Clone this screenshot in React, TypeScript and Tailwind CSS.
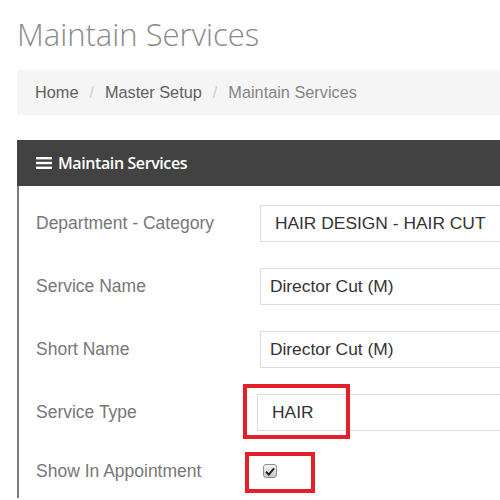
import React from "react";

type Field = {
  label: string;
  value: string;
  pad: string;
};

const fields: Field[] = [
  { label: "Department - Category", value: "HAIR DESIGN - HAIR CUT", pad: "pl-[14px]" },
  { label: "Service Name", value: "Director Cut (M)", pad: "pl-[9px]" },
  { label: "Short Name", value: "Director Cut (M)", pad: "pl-[9px]" },
];

function MenuIcon() {
  return (
    <svg width="16" height="14" viewBox="0 0 16 14" className="mr-[6px]">
      <rect x="0" y="1" width="16" height="2.4" fill="#fff" />
      <rect x="0" y="5.8" width="16" height="2.4" fill="#fff" />
      <rect x="0" y="10.6" width="16" height="2.4" fill="#fff" />
    </svg>
  );
}

function CheckBox() {
  return (
    <span className="flex h-[14px] w-[14px] items-center justify-center rounded-[3px] border border-[#8f8f8f] bg-gradient-to-b from-[#f4f4f4] to-[#c9c9c9]">
      <svg width="10" height="9" viewBox="0 0 10 9">
        <path d="M1 4.8 L3.8 7.6 L9 1.4" fill="none" stroke="#222" strokeWidth="2" />
      </svg>
    </span>
  );
}

export default function App() {
  return (
    <div className="h-[500px] w-[500px] overflow-hidden bg-white pl-[17px] font-['Liberation_Sans',Arial,sans-serif]">
      <h1 className="pt-[15px] font-['Open_Sans',sans-serif] text-[31px] font-light leading-[38px] text-[#8a8a8a] whitespace-nowrap">
        Maintain Services
      </h1>

      {/* breadcrumb */}
      <div className="mt-[17px] flex h-[45px] w-[560px] items-center bg-[#f5f5f5] pl-[18px] text-[16.3px] whitespace-nowrap">
        <span className="text-[#606060]">Home</span>
        <span className="px-[11px] text-[#ccc]">/</span>
        <span className="text-[#606060]">Master Setup</span>
        <span className="px-[11px] text-[#ccc]">/</span>
        <span className="text-[#858585]">Maintain Services</span>
      </div>

      {/* panel */}
      <div className="mt-[25px] w-[560px]">
        <div className="flex h-[46px] items-center bg-[#424242] pl-[19px] font-['Open_Sans',sans-serif] text-[16px] font-semibold tracking-[-0.4px] text-white whitespace-nowrap">
          <MenuIcon />
          Maintain Services
        </div>

        <div className="flex flex-col gap-[26px] border-l-2 border-[#7d7d7d] pt-[19px] pl-[17px] pb-[20px]">
          {fields.map((f) => (
            <div key={f.label} className="flex items-center">
              <div className="w-[226px] text-[17.5px] text-[#777] whitespace-nowrap">{f.label}</div>
              <div className={`flex h-[37px] w-[320px] items-center border border-[#dcdcdc] text-[17.4px] text-[#333] whitespace-nowrap ${f.pad}`}>
                {f.value}
              </div>
            </div>
          ))}

          <div className="flex items-center">
            <div className="w-[226px] text-[17.5px] text-[#777] whitespace-nowrap">Service Type</div>
            <div className="relative">
              <div className="flex h-[37px] w-[320px] items-center border border-[#dcdcdc] pl-[14px] text-[17.4px] text-[#333]">
                HAIR
              </div>
              <div className="absolute left-[-14px] top-[-10px] h-[55px] w-[107px] border-[4px] border-[#e3202a]" />
            </div>
          </div>

          <div className="mt-[7px] flex h-[14px] items-center">
            <div className="w-[226px] text-[17.5px] text-[#777] whitespace-nowrap">Show In Appointment</div>
            <div className="relative ml-[1px]">
              <CheckBox />
              <div className="absolute left-[-18px] top-[-12px] h-[41px] w-[70px] border-[4px] border-[#e3202a]" />
            </div>
          </div>
        </div>
      </div>
    </div>
  );
}
